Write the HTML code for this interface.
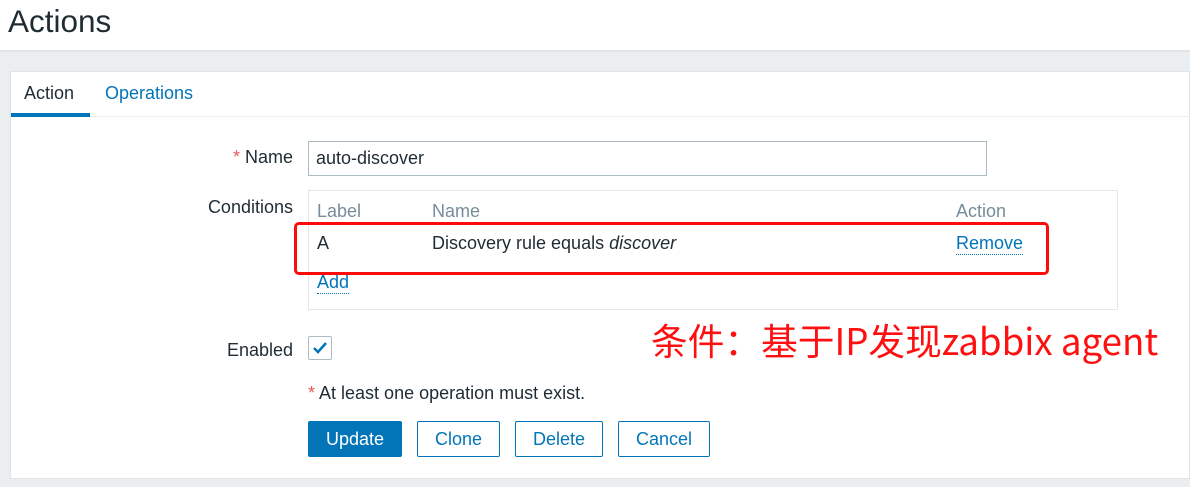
<!DOCTYPE html>
<html><head><meta charset="utf-8"><style>
*{margin:0;padding:0;box-sizing:border-box}
body{width:1190px;height:487px;overflow:hidden;background:#ebeef0;font-family:"Liberation Sans","Noto Sans CJK SC",sans-serif;color:#1f2c33;font-size:18px;position:relative}
.a{position:absolute}
.top{left:0;top:0;width:1190px;height:52px;background:#fff;border-bottom:2px solid #dfe4e7}
h1{position:absolute;left:8px;top:3px;font-size:31.5px;font-weight:normal;color:#1f2c33}
.panel{left:10px;top:71px;width:1180px;height:408px;background:#fff;border:1px solid #dfe4e7}
.lbl{text-align:right;width:200px}
.btn{position:absolute;top:421px;height:36px;border:1px solid #0275b8;border-radius:2px;color:#0275b8;font-size:18px;text-align:center;line-height:34px;background:#fff}
.lnk{color:#0275b8;border-bottom:1px dotted #0275b8}
</style></head><body>
<div class="a top"><h1>Actions</h1></div>
<div class="a panel"></div>
<div class="a" style="left:24px;top:83px;font-size:18px">Action</div>
<div class="a" style="left:105px;top:83px;font-size:18px;color:#0275b8">Operations</div>
<div class="a" style="left:11px;top:113px;width:79px;height:4px;background:#0275b8"></div>
<div class="a" style="left:90px;top:116px;width:1100px;height:1px;background:#ebeef0"></div>
<div class="a lbl" style="left:93px;top:147px"><span style="color:#e45959">*</span> Name</div>
<div class="a" style="left:308px;top:141px;width:679px;height:35px;border:1px solid #acbbc2;padding:6px 7px">auto-discover</div>
<div class="a lbl" style="left:93px;top:197px">Conditions</div>
<div class="a" style="left:308px;top:190px;width:810px;height:120px;border:1px solid #e3e7ea"></div>
<div class="a" style="left:317px;top:201px;color:#768d99">Label</div>
<div class="a" style="left:432px;top:201px;color:#768d99">Name</div>
<div class="a" style="left:956px;top:201px;color:#768d99">Action</div>
<div class="a" style="left:317px;top:233px">A</div>
<div class="a" style="left:432px;top:233px">Discovery rule equals <i>discover</i></div>
<div class="a lnk" style="left:956px;top:233px">Remove</div>
<div class="a lnk" style="left:317px;top:272px">Add</div>
<div class="a" style="left:294px;top:222px;width:755px;height:53px;border:3px solid #ff0a0a;border-radius:5px"></div>
<div class="a" style="left:651px;top:316px;font-size:36.7px;color:#ff1010;font-family:'Noto Sans CJK SC','Liberation Sans',sans-serif;line-height:46px">条件：基于IP发现zabbix agent</div>
<div class="a lbl" style="left:93px;top:340px">Enabled</div>
<div class="a" style="left:308px;top:336px;width:24px;height:24px;border:1px solid #acbbc2;border-radius:2px"><svg width="22" height="22" viewBox="0 0 22 22"><path d="M5 11l4 4 8-9" stroke="#0275b8" stroke-width="2.5" fill="none"/></svg></div>
<div class="a" style="left:308px;top:383px"><span style="color:#e45959">*</span> At least one operation must exist.</div>
<div class="btn" style="left:308px;width:94px;background:#0275b8;color:#fff">Update</div>
<div class="btn" style="left:417px;width:83px">Clone</div>
<div class="btn" style="left:515px;width:88px">Delete</div>
<div class="btn" style="left:618px;width:92px">Cancel</div>
</body></html>
